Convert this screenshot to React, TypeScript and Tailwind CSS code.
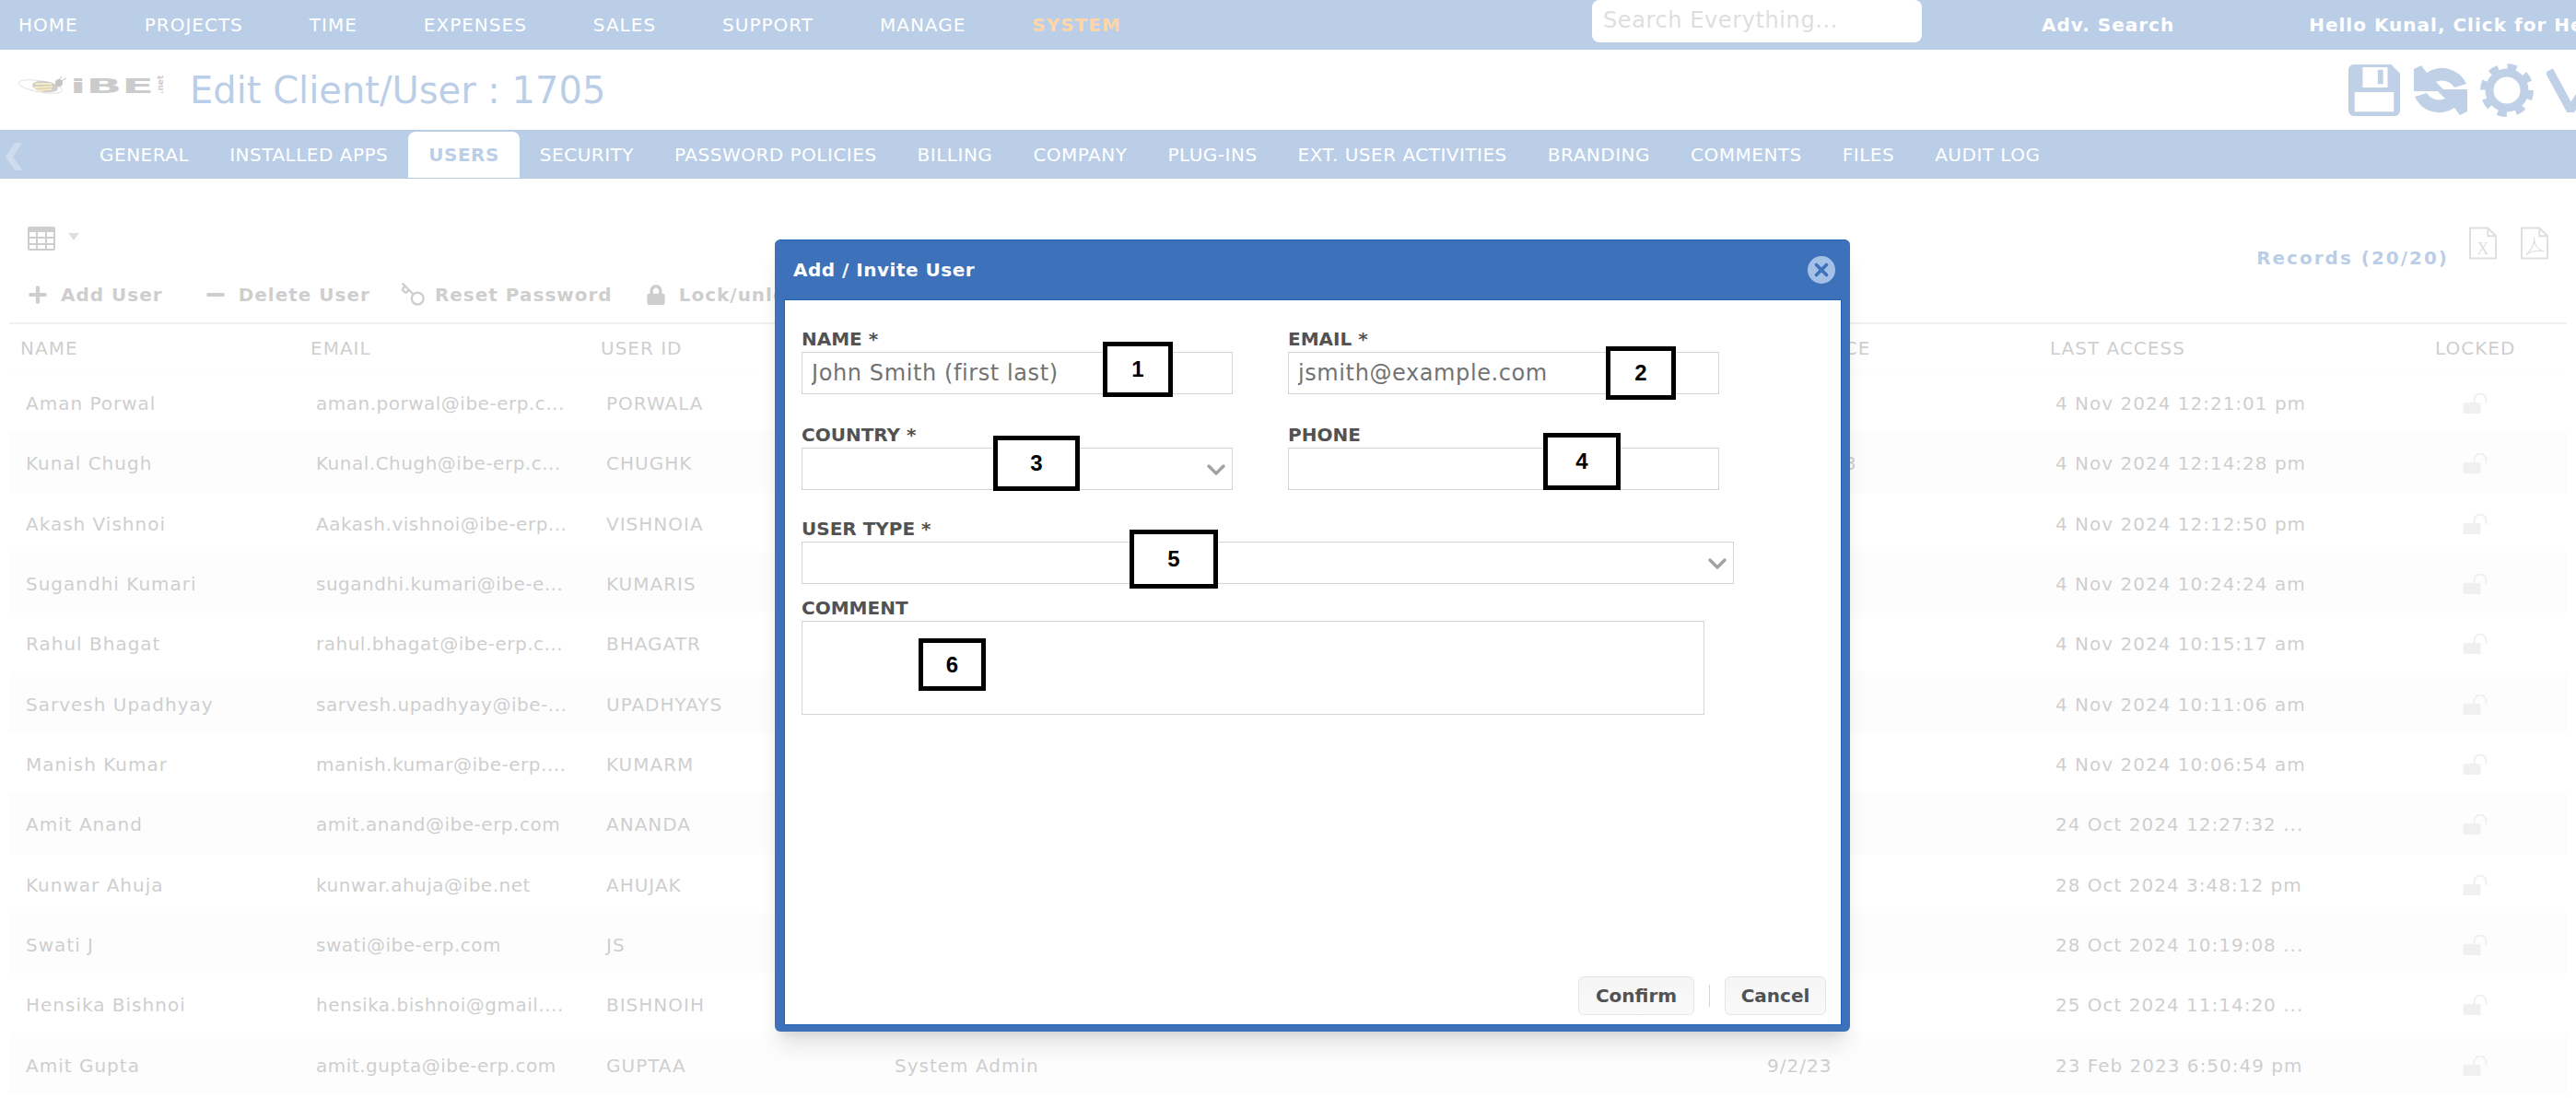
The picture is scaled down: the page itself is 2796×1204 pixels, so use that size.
import { ChevronDown, Key, X } from "lucide-react";
import { FaLock, FaMinus, FaPlus } from "react-icons/fa";

const menu = ["HOME", "PROJECTS", "TIME", "EXPENSES", "SALES", "SUPPORT", "MANAGE"];

const tabs = [
  "GENERAL",
  "INSTALLED APPS",
  "USERS",
  "SECURITY",
  "PASSWORD POLICIES",
  "BILLING",
  "COMPANY",
  "PLUG-INS",
  "EXT. USER ACTIVITIES",
  "BRANDING",
  "COMMENTS",
  "FILES",
  "AUDIT LOG",
];

const users = [
  { name: "Aman Porwal", email: "aman.porwal@ibe-erp.c...", id: "PORWALA", since: "", last: "4 Nov 2024 12:21:01 pm" },
  { name: "Kunal Chugh", email: "Kunal.Chugh@ibe-erp.c...", id: "CHUGHK", since: "11/10/23", last: "4 Nov 2024 12:14:28 pm" },
  { name: "Akash Vishnoi", email: "Aakash.vishnoi@ibe-erp...", id: "VISHNOIA", since: "", last: "4 Nov 2024 12:12:50 pm" },
  { name: "Sugandhi Kumari", email: "sugandhi.kumari@ibe-e...", id: "KUMARIS", since: "", last: "4 Nov 2024 10:24:24 am" },
  { name: "Rahul Bhagat", email: "rahul.bhagat@ibe-erp.c...", id: "BHAGATR", since: "", last: "4 Nov 2024 10:15:17 am" },
  { name: "Sarvesh Upadhyay", email: "sarvesh.upadhyay@ibe-...", id: "UPADHYAYS", since: "", last: "4 Nov 2024 10:11:06 am" },
  { name: "Manish Kumar", email: "manish.kumar@ibe-erp....", id: "KUMARM", since: "", last: "4 Nov 2024 10:06:54 am" },
  { name: "Amit Anand", email: "amit.anand@ibe-erp.com", id: "ANANDA", since: "", last: "24 Oct 2024 12:27:32 ..." },
  { name: "Kunwar Ahuja", email: "kunwar.ahuja@ibe.net", id: "AHUJAK", since: "", last: "28 Oct 2024 3:48:12 pm" },
  { name: "Swati J", email: "swati@ibe-erp.com", id: "JS", since: "", last: "28 Oct 2024 10:19:08 ..." },
  { name: "Hensika Bishnoi", email: "hensika.bishnoi@gmail....", id: "BISHNOIH", since: "", last: "25 Oct 2024 11:14:20 ..." },
  { name: "Amit Gupta", email: "amit.gupta@ibe-erp.com", id: "GUPTAA", role: "System Admin", since: "9/2/23", last: "23 Feb 2023 6:50:49 pm" },
];

const columns = "grid grid-cols-[315px_315px_313px_947px_313px_418px_1fr]";

const Logo = () => (
  <svg viewBox="0 0 160 22" className="mb-2 h-6 w-40">
    <ellipse cx="24" cy="11" rx="24" ry="6" fill="none" stroke="#8a8a8a" strokeWidth="0.7" transform="rotate(10 24 11)" />
    <ellipse cx="29" cy="11" rx="14" ry="6" fill="#6f6f6f" transform="rotate(8 29 11)" />
    <path d="M18 8 L36 8 M17 12 L37 11 M20 15 L36 14" stroke="#e8c23a" strokeWidth="1.8" />
    <circle cx="44" cy="7" r="4" fill="#555" />
    <path d="M44 4 L47 0 M46 5 L52 2" stroke="#555" strokeWidth="1" />
    <text x="56" y="18" textLength="91" lengthAdjust="spacingAndGlyphs" fontSize="21" fontWeight="900" fill="#6b6b6b">
      iBE
    </text>
    <text x="0" y="0" fontSize="9" fontWeight="700" fill="#6b6b6b" transform="translate(157 19) rotate(-90)">
      .net
    </text>
  </svg>
);

const Floppy = () => (
  <svg viewBox="0 0 58 58" className="h-14 w-14.5" fill="currentColor">
    <path d="M6 0 H48 L58 10 V52 a6 6 0 0 1 -6 6 H6 a6 6 0 0 1 -6 -6 V6 a6 6 0 0 1 6 -6 Z M16 3 V26 H44 V3 Z M7 31 V53 H51 V31 Z" fillRule="evenodd" />
    <rect x="33" y="6" width="6" height="16" />
  </svg>
);

const Refresh = () => (
  <svg viewBox="0 0 58 58" className="size-14.5" fill="currentColor">
    <g id="half">
      <path d="M0 6 V30 H34 L24 20 A16 16 0 0 1 44 26 L57 22 A29 29 0 0 0 14 10 L8 2 Z" />
    </g>
    <path d="M58 52 V28 H24 L34 38 A16 16 0 0 1 14 32 L1 36 A29 29 0 0 0 44 48 L50 56 Z" />
  </svg>
);

const Gear = () => (
  <svg viewBox="0 0 58 58" className="size-14.5" fill="none" stroke="currentColor">
    <circle cx="29" cy="29" r="19" strokeWidth="9" />
    <circle cx="29" cy="29" r="25" strokeWidth="8" strokeDasharray="9.8 9.8" />
  </svg>
);

const GridIcon = () => (
  <svg viewBox="0 0 30 26" className="h-6.5 w-7.5 text-neutral-500" fill="currentColor">
    <path d="M2 0 H28 a2 2 0 0 1 2 2 V24 a2 2 0 0 1 -2 2 H2 a2 2 0 0 1 -2 -2 V2 a2 2 0 0 1 2 -2 Z M2 6 V11 H9 V6 Z M11 6 V11 H19 V6 Z M21 6 V11 H28 V6 Z M2 13 V18 H9 V13 Z M11 13 V18 H19 V13 Z M21 13 V18 H28 V13 Z M2 20 V24 H9 V20 Z M11 20 V24 H19 V20 Z M21 20 V24 H28 V20 Z" fillRule="evenodd" />
  </svg>
);

const DocIcon = ({ kind }: { kind: "xls" | "pdf" | "plain" }) => (
  <svg viewBox="0 0 31 36" className="h-9 w-7.5 shrink-0 text-neutral-400" fill="none" stroke="currentColor" strokeWidth="2">
    <path d="M1 1 H21 L30 10 V35 H1 Z M21 1 V10 H30" />
    {kind === "xls" && (
      <text x="15.5" y="30" textAnchor="middle" fontSize="19" fontFamily="Liberation Serif" fill="currentColor" stroke="none">
        X
      </text>
    )}
    {kind === "pdf" && <path d="M6 31 C12 26 16 18 15 12 C15 20 20 26 26 27 C20 26 12 27 6 31 Z" strokeWidth="1.2" />}
  </svg>
);

const OpenLock = () => (
  <svg viewBox="0 0 27 22" className="h-5.5 w-7 text-neutral-300">
    <rect x="0" y="10" width="19" height="12" rx="1.5" fill="currentColor" />
    <path d="M12 10 V7 a6.5 6.5 0 0 1 13 0 V11" fill="none" stroke="currentColor" strokeWidth="2" />
  </svg>
);

const Label = ({ children }: { children: string }) => (
  <label className="block h-6 text-xl leading-none font-bold text-neutral-600">{children}</label>
);

const inputClass =
  "h-11.5 border border-neutral-300 bg-white px-2.5 text-2xl tracking-wide text-neutral-600 outline-none placeholder:text-neutral-500";

const Select = ({ wide }: { wide?: boolean }) => (
  <div className={wide ? "relative w-253" : "relative w-117"}>
    <div className="h-11.5 border border-neutral-300 bg-white" />
    <ChevronDown className="absolute top-2 right-0.5 size-8 text-neutral-400" strokeWidth={2.5} />
  </div>
);

const Callout = ({ n, className }: { n: number; className: string }) => (
  <div
    className={`absolute flex items-center justify-center border-5 border-black bg-white font-['Liberation_Sans',sans-serif] text-2xl font-bold text-black ${className}`}
  >
    {n}
  </div>
);

export default function App() {
  return (
    <div className="relative flex h-screen flex-col overflow-hidden bg-white font-['DejaVu_Sans',sans-serif]">
      {/* Top menu */}
      <div className="flex h-13.5 shrink-0 items-center whitespace-nowrap bg-[#3d72bb] text-white">
        <nav className="flex w-432 shrink-0 items-center gap-18 pl-5 text-xl tracking-wider">
          {menu.map((item) => (
            <span key={item}>{item}</span>
          ))}
          <span className="font-bold text-orange-400">SYSTEM</span>
        </nav>
        <div className="h-11.5 w-89.5 shrink-0 self-start rounded-lg bg-white pl-3 text-2xl leading-11 tracking-wide text-neutral-400">
          Search Everything...
        </div>
        <span className="ml-32.5 shrink-0 text-xl font-bold tracking-wider">Adv. Search</span>
        <span className="ml-36.5 shrink-0 text-xl font-bold tracking-wider">Hello Kunal, Click for Help</span>
      </div>

      {/* Page title */}
      <div className="flex h-21.75 shrink-0 items-center pl-5 whitespace-nowrap">
        <Logo />
        <h1 className="ml-6.5 text-[40px] text-[#3d72bb]">Edit Client/User : 1705</h1>
        <div className="ml-auto -mr-6 flex items-center gap-3.5 text-[#4a7ab8]">
          <Floppy />
          <Refresh />
          <Gear />
          <svg viewBox="0 0 60 50" className="h-12 w-14" fill="none" stroke="currentColor" strokeWidth="10">
            <path d="M3 2 L28 48 L58 2" />
          </svg>
        </div>
      </div>

      {/* Tabs */}
      <div className="flex h-13.25 shrink-0 items-end border-y border-[#2f66b0] bg-[#3d72bb] whitespace-nowrap text-white">
        <svg viewBox="0 0 18 30" className="mb-2 ml-1.5 h-7.5 w-4.5 shrink-0 text-white/30" fill="currentColor">
          <path d="M10 0 H18 L8 15 L18 30 H10 L0 15 Z" />
        </svg>
        <div className="ml-15.5 flex h-full items-end text-xl tracking-wide">
          {tabs.map((tab) =>
            tab === "USERS" ? (
              <span key={tab} className="flex h-12.5 items-center rounded-t-lg bg-white px-5.5 font-bold text-[#3d72bb]">
                {tab}
              </span>
            ) : (
              <span key={tab} className="flex h-12.5 items-center px-5.5">
                {tab}
              </span>
            ),
          )}
        </div>
      </div>

      {/* Toolbar */}
      <div className="mx-2.5 flex h-39.5 shrink-0 justify-between overflow-hidden border-b-2 border-neutral-300 whitespace-nowrap">
        <div className="flex flex-col pt-13 pl-5">
          <div className="flex items-center gap-3.5">
            <GridIcon />
            <span className="mb-1 h-0 w-0 border-x-6 border-t-8 border-x-transparent border-t-neutral-400" />
          </div>
          <div className="mt-8.5 flex items-center text-xl font-bold tracking-wider text-neutral-500">
            <FaPlus className="size-5.5 shrink-0" />
            <span className="ml-3.5">Add User</span>
            <FaMinus className="ml-11.5 size-5.5 shrink-0" />
            <span className="ml-3.5">Delete User</span>
            <Key className="ml-8 size-7 shrink-0 -scale-x-100" />
            <span className="ml-2.5">Reset Password</span>
            <FaLock className="ml-9 size-5.5 shrink-0" />
            <span className="ml-3.5">Lock/unlock</span>
          </div>
        </div>
        <div className="-mr-9 flex items-start gap-6.5 pt-13 text-neutral-500">
          <span className="mt-5 -mr-1 text-xl font-bold tracking-widest text-[#3d72bb]">Records (20/20)</span>
          <DocIcon kind="xls" />
          <DocIcon kind="pdf" />
          <DocIcon kind="plain" />
        </div>
      </div>

      {/* Users table */}
      <div className="mx-2.5 flex min-h-0 flex-1 flex-col pb-4 whitespace-nowrap">
        <div className={`${columns} h-13 shrink-0 items-center border-b border-neutral-100 pl-3 text-xl tracking-wider text-neutral-500`}>
          <span>NAME</span>
          <span>EMAIL</span>
          <span>USER ID</span>
          <span />
          <span className="-ml-3">USER SINCE</span>
          <span>LAST ACCESS</span>
          <span>LOCKED</span>
        </div>
        {users.map((u, i) => (
          <div
            key={u.id}
            className={`${columns} flex-1 items-center border-b border-neutral-100 pt-1 pl-4.5 text-xl tracking-wider text-neutral-500 ${i % 2 ? "bg-neutral-50" : ""}`}
          >
            <span>{u.name}</span>
            <span className="tracking-wide">{u.email}</span>
            <span>{u.id}</span>
            <span>{u.role}</span>
            <span>{u.since}</span>
            <span>{u.last}</span>
            <span className="pl-6">
              <OpenLock />
            </span>
          </div>
        ))}
      </div>

      {/* Dimmed backdrop */}
      <div className="absolute inset-0 bg-white/65" />

      {/* Add / Invite dialog */}
      <div className="absolute top-65 left-[841px] flex h-215 w-[1167px] flex-col rounded-md border-t border-[#1f63b5] bg-[#3d72bb] shadow-xl">
        <div className="flex h-16 shrink-0 items-center justify-between pr-4 pl-5 text-white">
          <span className="text-xl font-bold tracking-wide">Add / Invite User</span>
          <span className="flex size-7.5 items-center justify-center rounded-full bg-[#a5c0e6] text-[#3d72bb]">
            <X className="size-5.5" strokeWidth={4} />
          </span>
        </div>
        <div className="mr-2.25 mb-1.75 ml-2.5 flex flex-1 flex-col border border-[#1f63b5] bg-white pt-8 pl-4.5">
          <div className="grid w-294 grid-cols-[468px_468px] gap-x-15 gap-y-8.5">
            <div>
              <Label>NAME *</Label>
              <input className={`${inputClass} w-117`} placeholder="John Smith (first last)" />
            </div>
            <div>
              <Label>EMAIL *</Label>
              <input className={`${inputClass} w-117`} placeholder="jsmith@example.com" />
            </div>
            <div>
              <Label>COUNTRY *</Label>
              <Select />
            </div>
            <div>
              <Label>PHONE</Label>
              <input className={`${inputClass} w-117`} />
            </div>
          </div>
          <div className="mt-8">
            <Label>USER TYPE *</Label>
            <Select wide />
          </div>
          <div className="mt-4">
            <Label>COMMENT</Label>
            <textarea className="block h-25.5 w-245 resize-none border border-neutral-300 outline-none" />
          </div>
          <div className="mt-auto flex items-center justify-end gap-4 pr-4 pb-2.5 text-xl font-bold text-neutral-600">
            <button className="h-10.5 w-31.5 rounded-md border border-neutral-200 bg-gradient-to-b from-neutral-100 to-neutral-50">Confirm</button>
            <span className="h-6 border-l border-neutral-300" />
            <button className="h-10.5 w-27.5 rounded-md border border-neutral-200 bg-gradient-to-b from-neutral-100 to-neutral-50">Cancel</button>
          </div>
        </div>
        <Callout n={1} className="top-27.5 left-89 h-15 w-19" />
        <Callout n={2} className="top-28.75 left-225.5 h-14.5 w-19" />
        <Callout n={3} className="top-53 left-59.25 h-15 w-23.5" />
        <Callout n={4} className="top-52.25 left-208.5 h-15.5 w-21" />
        <Callout n={5} className="top-78.5 left-96.25 h-16 w-24" />
        <Callout n={6} className="top-108 left-39 h-14.25 w-18.25" />
      </div>
    </div>
  );
}
